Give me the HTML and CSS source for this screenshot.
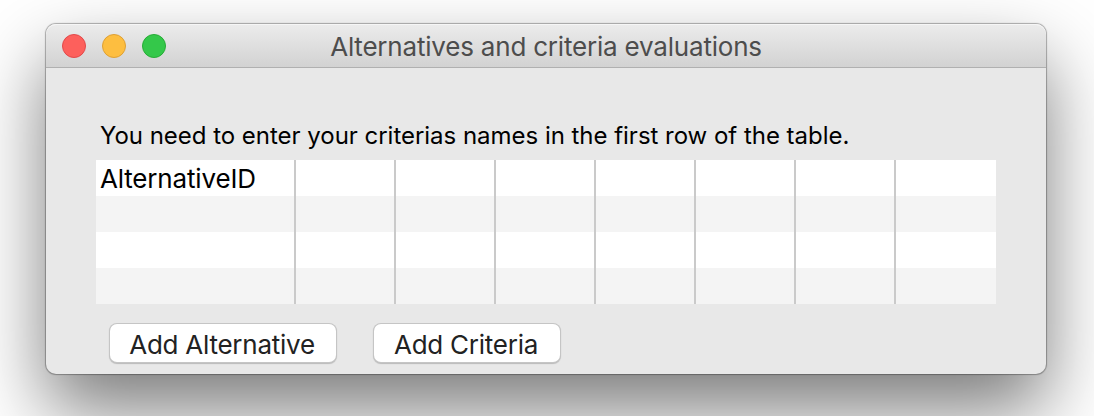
FILE: index.html
```html
<!DOCTYPE html>
<html lang="en">
<head>
<meta charset="utf-8">
<title>Alternatives and criteria evaluations</title>
<link rel="stylesheet" href="styles.css">
</head>
<body>
<main class="window">
  <header class="titlebar">
    <div class="controls">
      <span class="control close"></span>
      <span class="control minimize"></span>
      <span class="control zoom"></span>
    </div>
    <h1 class="title"><span>Alternatives and criteria evaluations</span></h1>
  </header>
  <section class="content">
    <p class="hint"><span>You need to enter your criterias names in the first row of the table.</span></p>
    <table class="grid">
      <colgroup><col class="wide"><col span="7"></colgroup>
      <tbody>
        <tr><td><span>AlternativeID</span></td><td></td><td></td><td></td><td></td><td></td><td></td><td></td></tr>
        <tr><td></td><td></td><td></td><td></td><td></td><td></td><td></td><td></td></tr>
        <tr><td></td><td></td><td></td><td></td><td></td><td></td><td></td><td></td></tr>
        <tr><td></td><td></td><td></td><td></td><td></td><td></td><td></td><td></td></tr>
      </tbody>
    </table>
    <div class="actions">
      <button class="button add-alternative" type="button">Add Alternative</button>
      <button class="button add-criteria" type="button">Add Criteria</button>
    </div>
  </section>
</main>
</body>
</html>
```
FILE: styles.css
```css
* { box-sizing: border-box; }

body {
  margin: 0;
  height: 416px;
  padding: 24px 48px 42px 46px;
  overflow: hidden;
  background: #fff;
  font-family: Inter, "Liberation Sans", sans-serif;
  color: #000;
}

.window {
  width: 1000px;
  height: 350px;
  border-radius: 10px;
  background: #e8e8e8;
  box-shadow: 0 0 1px 1px rgba(0, 0, 0, .3), 0 36px 76px rgba(0, 0, 0, .52);
}

.titlebar {
  display: grid;
  grid-template-columns: 1fr auto 1fr;
  align-items: center;
  height: 44px;
  padding: 0 16px;
  border-bottom: 1px solid #b0b0b0;
  border-radius: 10px 10px 0 0;
  background: linear-gradient(#ececec, #d2d2d2);
  box-shadow: inset 0 1px #f6f6f6;
}

.controls { display: flex; gap: 16px; }

.control {
  width: 24px;
  height: 24px;
  border: 1px solid;
  border-radius: 50%;
}
.close { background: #fd605c; border-color: #e2494a; }
.minimize { background: #fdbe40; border-color: #dea034; }
.zoom { background: #34c84a; border-color: #27ac36; }

.title {
  margin: 0;
  padding-top: 2px;
  font-size: 26px;
  font-weight: 400;
  line-height: 32px;
  letter-spacing: -.2px;
  color: #4d4d4d;
  white-space: nowrap;
}

.content { padding: 52px 50px 0; }

.hint {
  margin: 0;
  padding-left: 4px;
  height: 40px;
  font-size: 24px;
  line-height: 32px;
  letter-spacing: -.025px;
  white-space: nowrap;
}

.grid {
  width: 900px;
  table-layout: fixed;
  border-collapse: separate;
  border-spacing: 0;
  font-size: 26px;
  line-height: 34px;
  letter-spacing: -.17px;
}
.wide { width: 200px; }
.grid tr { height: 36px; background: #fff; }
.grid tr:nth-child(even) { background: #f4f4f4; }
.grid td { padding: 2px 0 0 4px; border-right: 2px solid #cacaca; }
.grid td:last-child { border-right: 0; }

.actions {
  display: flex;
  gap: 38px;
  padding: 20px 0 0 14px;
}

.button {
  height: 38px;
  padding: 3px 2px 0 0;
  border: 0;
  border-radius: 7px;
  background: #fff;
  box-shadow: 0 0 0 1px #c5c5c5, 0 1px 1px 1px rgba(0, 0, 0, .2);
  font: 400 26px/32px Inter, "Liberation Sans", sans-serif;
  letter-spacing: -.25px;
  color: #222;
}
.add-alternative { width: 226px; }
.add-criteria { width: 186px; }
```
